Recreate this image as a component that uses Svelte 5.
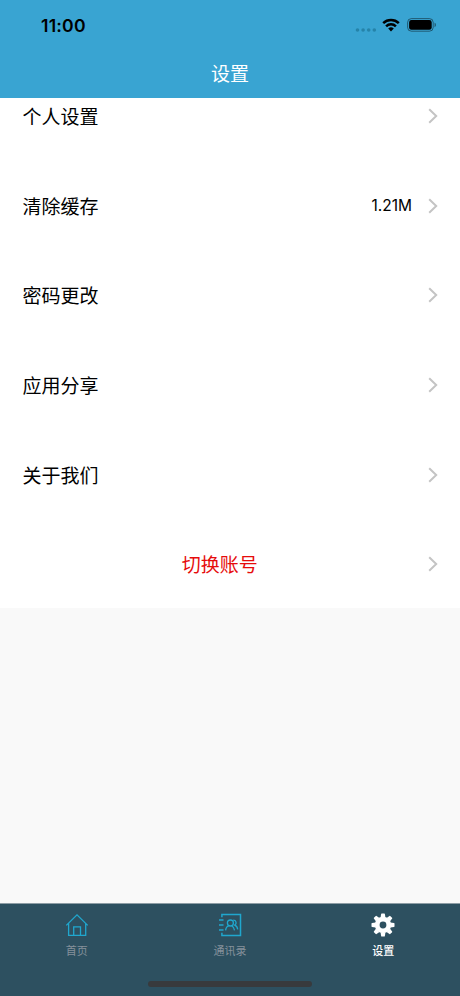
<script lang="ts">
  type Row = { label: string; value?: string; danger?: boolean };

  const rows: Row[] = [
    { label: '个人设置' },
    { label: '清除缓存', value: '1.21M' },
    { label: '密码更改' },
    { label: '应用分享' },
    { label: '关于我们' },
    { label: '切换账号', danger: true },
  ];

  const tabs = [
    { id: 'home', label: '首页' },
    { id: 'contacts', label: '通讯录' },
    { id: 'settings', label: '设置' },
  ];

  let active = $state('settings');
</script>

<div class="screen">
  <header class="header">
    <div class="status-bar">
      <span class="time">11:00</span>
      <div class="status-icons">
        <svg class="signal" width="22" height="6" viewBox="0 0 22 6">
          <circle cx="2.5" cy="3" r="1.8" />
          <circle cx="8.1" cy="3" r="1.8" />
          <circle cx="13.7" cy="3" r="1.8" />
          <circle cx="19.3" cy="3" r="1.8" />
        </svg>
        <svg class="wifi" width="18" height="14" viewBox="0 0 18 14">
          <path d="M1.2 5.1a11.3 11.3 0 0 1 15.6 0M4.1 8.3a7 7 0 0 1 9.8 0" fill="none" stroke="#000" stroke-width="2.5" />
          <path d="M9 13.4l-2.8-2.8a4 4 0 0 1 5.6 0z" />
        </svg>
        <svg class="battery" width="30" height="14" viewBox="0 0 30 14">
          <rect x="0.6" y="0.6" width="25.6" height="12.6" rx="3.8" fill="none" stroke="#000" stroke-opacity="0.45" />
          <rect x="2.1" y="2.1" width="22.6" height="9.6" rx="2.3" />
          <path d="M27.6 4.8v4.4c1.7-.6 1.7-3.8 0-4.4z" fill-opacity="0.5" />
        </svg>
      </div>
    </div>
    <h1 class="title">设置</h1>
  </header>

  <main class="content">
    <div class="list">
      {#each rows as row}
        <div class="row">
          <span class="label" class:danger={row.danger}>{row.label}</span>
          {#if row.value}
            <span class="value">{row.value}</span>
          {/if}
          <svg class="arrow" width="10" height="16" viewBox="0 0 10 16">
            <path d="M1.2 1.3L8.2 8l-7 6.7" />
          </svg>
        </div>
      {/each}
    </div>
  </main>

  <footer class="footer">
    <nav class="tabs">
      {#each tabs as tab}
        <button class="tab" class:active={active === tab.id} onclick={() => (active = tab.id)}>
          <svg class="tab-icon" width="24" height="24" viewBox="0 0 24 24">
            {#if tab.id === 'home'}
              <path d="M1.3 12.4L12 1.8l10.7 10.6M3.6 10.4v11.9h17.1V10.4M8.7 22.3v-8.5h6.8v8.5" />
            {:else if tab.id === 'contacts'}
              <path d="M3.9 4.3V1.6h18.6v20.8H3.9v-2.7" stroke-width="1.5" />
              <path d="M1 6.9h4.5M1 12h4.5M1 17h4.5" stroke-width="1.5" />
              <circle cx="12.4" cy="10" r="3" />
              <path d="M7.6 17.4c.3-2.8 1.8-4.3 3.7-4.7M13.7 12.7c1.5.8 2.6 2.4 2.8 4.7M15.2 7.2c3.2 0 3.8 3.4 1.6 4.9 1.7.7 2.7 2.1 2.9 4.3" />
            {:else}
              <g class="gear">
                {#each [0, 45, 90, 135, 180, 225, 270, 315] as angle}
                  <path d="M9.6 4.6l.5-3.6q.1-.5.6-.5h2.6q.5 0 .6.5l.5 3.6z" transform="rotate({angle} 12 12)" />
                {/each}
                <path fill-rule="evenodd" d="M12 3.8a8.2 8.2 0 1 0 0 16.4 8.2 8.2 0 0 0 0-16.4zm0 4.8a3.4 3.4 0 1 1 0 6.8 3.4 3.4 0 0 1 0-6.8z" />
              </g>
            {/if}
          </svg>
          <span class="tab-label">{tab.label}</span>
        </button>
      {/each}
    </nav>
    <div class="home-indicator"></div>
  </footer>
</div>

<style>
  :global(body) {
    margin: 0;
  }

  .screen {
    display: flex;
    flex-direction: column;
    height: 996px;
    overflow: hidden;
    background: #f9f9f9;
    color: #000;
    font-family: Inter, 'Noto Sans CJK SC', sans-serif;
  }

  .header {
    flex: none;
    height: 98px;
    background: #39a4d2;
  }

  .status-bar {
    display: flex;
    align-items: center;
    justify-content: space-between;
    height: 50px;
    padding: 0 23px 0 41px;
  }

  .time {
    padding-top: 1px;
    font-size: 17.6px;
    font-weight: 600;
    line-height: 20px;
    letter-spacing: 0.2px;
  }

  .status-icons {
    display: flex;
    align-items: center;
  }

  .signal {
    margin: 9px 5px 0 0;
    fill: #2583a9;
  }

  .wifi {
    margin-right: 7px;
  }

  .title {
    margin: 0;
    color: #fff;
    font-size: 19px;
    font-weight: 400;
    line-height: 50px;
    text-align: center;
  }

  .content {
    flex: 1;
    display: flex;
    flex-direction: column;
    justify-content: flex-start;
    overflow: hidden;
  }

  /* the list is scrolled slightly under the header */
  .list {
    margin-top: -27.6px;
    background: #fff;
  }

  .row {
    display: flex;
    align-items: center;
    box-sizing: border-box;
    height: 89.6px;
    padding: 2px 22px 0 22.5px;
  }

  .label {
    flex: 1;
    padding-top: 4px;
    font-size: 19px;
    line-height: 28px;
  }

  .danger {
    padding-right: 11px;
    color: #e60c0c;
    text-align: center;
  }

  .value {
    margin-right: 16px;
    padding-top: 1px;
    font-size: 15.5px;
    line-height: 20px;
  }

  .arrow {
    fill: none;
    stroke: #c4c4c4;
    stroke-width: 2;
  }

  .footer {
    flex: none;
    display: flex;
    flex-direction: column;
    align-items: center;
    justify-content: space-between;
    box-sizing: border-box;
    height: 93px;
    padding-bottom: 9px;
    border-top: 1px solid #8d9da5;
    background: #2d5060;
  }

  .tabs {
    display: flex;
    width: 100%;
  }

  .tab {
    flex: 1;
    display: flex;
    flex-direction: column;
    align-items: center;
    padding: 9px 0 0;
    border: none;
    background: none;
    color: #85919b;
    font-family: inherit;
    cursor: pointer;
  }

  .tab-icon {
    fill: none;
    stroke: #20a7ce;
    stroke-width: 1.3;
  }

  .gear {
    fill: #fff;
    stroke: none;
  }

  .tab-label {
    margin-top: 6px;
    font-size: 11px;
    line-height: 16px;
  }

  .active {
    color: #fff;
    font-weight: 500;
  }

  .home-indicator {
    width: 164px;
    height: 6px;
    border-radius: 3px;
    background: #383a3d;
  }
</style>
